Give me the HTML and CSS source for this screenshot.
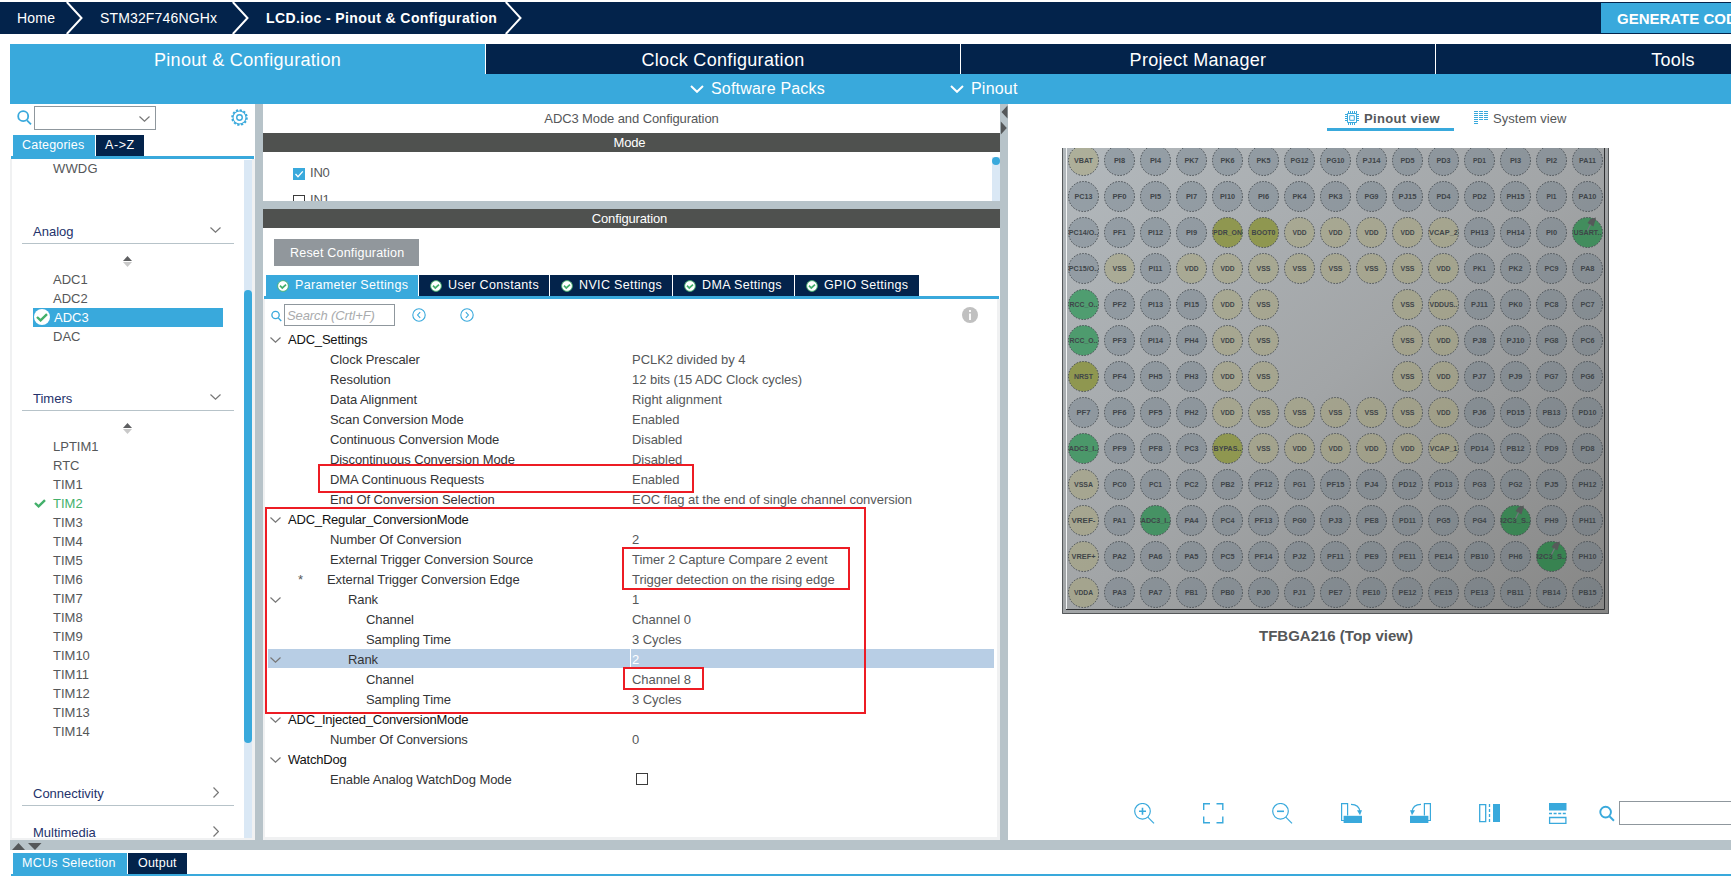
FILE: index.html
```html
<!DOCTYPE html>
<html lang="en">
<head>
<meta charset="utf-8">
<title>LCD.ioc - Pinout &amp; Configuration</title>
<link rel="stylesheet" href="styles.css">
</head>
<body>
<svg class="defs" width="0" height="0">
  <symbol id="down" viewBox="0 0 11 6"><path d="M.5 .5 5.5 5.2 10.5 .5" fill="none" stroke="currentColor" stroke-width="1.2"/></symbol>
  <symbol id="right" viewBox="0 0 6 11"><path d="M.5 .5 5.4 5.5 .5 10.5" fill="none" stroke="currentColor" stroke-width="1.2"/></symbol>
  <symbol id="wdown" viewBox="0 0 14 8"><path d="M1 1 7 6.8 13 1" fill="none" stroke="currentColor" stroke-width="2"/></symbol>
  <symbol id="crumb" viewBox="0 0 17 32"><path d="M.8 0 15.5 16 .8 32" fill="none" stroke="#fff" stroke-width="2"/></symbol>
  <symbol id="search" viewBox="0 0 15 15"><circle cx="6.2" cy="6.2" r="5" fill="none" stroke="currentColor" stroke-width="1.8"/><path d="M10 10.3 14 14.3" stroke="currentColor" stroke-width="1.8"/></symbol>
  <symbol id="ok" viewBox="0 0 12 12"><circle cx="6" cy="6" r="5.4" fill="#fff" stroke="#43b06b" stroke-width=".9"/><path d="M3 5.6 5.3 8 9 4.6" fill="none" stroke="#43b06b" stroke-width="1.7"/></symbol>
  <symbol id="sort" viewBox="0 0 9 11"><path d="M0 5 4.5 0 9 5z" fill="#5e5f61"/><path d="M0 6 4.5 11 9 6z" fill="#c9c9c9"/></symbol>
  <symbol id="check" viewBox="0 0 12 9"><path d="M1 4 4.6 7.4 11 1.2" fill="none" stroke="#43b06b" stroke-width="2.4"/></symbol>
</svg>

<header class="crumbs">
  <span class="crumb home">Home</span><svg class="crumb-sep"><use href="#crumb"/></svg>
  <span class="crumb mcu">STM32F746NGHx</span><svg class="crumb-sep"><use href="#crumb"/></svg>
  <span class="crumb file">LCD.ioc - Pinout &amp; Configuration</span><svg class="crumb-sep"><use href="#crumb"/></svg>
  <button class="generate">GENERATE CODE</button>
</header>

<nav class="main-tabs">
  <div class="main-tab on">Pinout &amp; Configuration</div>
  <div class="main-tab">Clock Configuration</div>
  <div class="main-tab">Project Manager</div>
  <div class="main-tab">Tools</div>
</nav>
<div class="menu-bar">
  <span class="menu packs"><svg><use href="#wdown"/></svg>Software Packs</span>
  <span class="menu pin"><svg><use href="#wdown"/></svg>Pinout</span>
</div>

<main class="work">
  <aside class="side">
    <div class="side-search">
      <svg class="glass"><use href="#search"/></svg>
      <div class="combo"><svg><use href="#down"/></svg></div>
      <svg class="gear" viewBox="0 0 16 16"><g fill="none" stroke="#39a9dc"><circle cx="8" cy="8" r="6.1"/><circle cx="8" cy="8" r="7" stroke-width="1.6" stroke-dasharray="2.1 1.565"/><circle cx="8" cy="8" r="2.6" stroke-width="1.3"/></g></svg>
    </div>
    <div class="side-tabs"><span class="tab on cat">Categories</span><span class="tab az">A-&gt;Z</span></div>
    <div class="side-body">
      <div class="tree">
        <div class="leaf first">WWDG</div>
        <div class="cat-head analog">Analog<svg class="chev"><use href="#down"/></svg></div>
        <svg class="sort"><use href="#sort"/></svg>
        <div class="leaf">ADC1</div>
        <div class="leaf">ADC2</div>
        <div class="leaf picked"><i class="bubble"><svg><use href="#check"/></svg></i>ADC3</div>
        <div class="leaf">DAC</div>
        <div class="cat-head timers">Timers<svg class="chev"><use href="#down"/></svg></div>
        <svg class="sort"><use href="#sort"/></svg>
        <div class="leaf">LPTIM1</div><div class="leaf">RTC</div><div class="leaf">TIM1</div>
        <div class="leaf used"><svg><use href="#check"/></svg>TIM2</div>
        <div class="leaf">TIM3</div><div class="leaf">TIM4</div><div class="leaf">TIM5</div><div class="leaf">TIM6</div>
        <div class="leaf">TIM7</div><div class="leaf">TIM8</div><div class="leaf">TIM9</div><div class="leaf">TIM10</div>
        <div class="leaf">TIM11</div><div class="leaf">TIM12</div><div class="leaf">TIM13</div><div class="leaf">TIM14</div>
        <div class="cat-head conn">Connectivity<svg class="chev-r"><use href="#right"/></svg></div>
        <div class="cat-head multi">Multimedia<svg class="chev-r"><use href="#right"/></svg></div>
      </div>
      <div class="track"><div class="thumb"></div></div>
    </div>
  </aside>

  <section class="config">
    <div class="config-title">ADC3 Mode and Configuration</div>
    <div class="bar">Mode</div>
    <div class="mode">
      <div class="mode-list">
        <label class="mode-row"><i class="box ticked"><svg viewBox="0 0 12 12"><path d="M2.5 6 5 8.8 9.8 3.4" fill="none" stroke="#fff" stroke-width="1.3"/></svg></i>IN0</label>
        <label class="mode-row"><i class="box"></i>IN1</label>
      </div>
      <div class="mode-track"><i></i></div>
    </div>
    <div class="split"></div>
    <div class="bar conf">Configuration</div>
    <button class="reset">Reset Configuration</button>
    <div class="param-tabs">
      <span class="tab on p1"><svg><use href="#ok"/></svg>Parameter Settings</span>
      <span class="tab p2"><svg><use href="#ok"/></svg>User Constants</span>
      <span class="tab p3"><svg><use href="#ok"/></svg>NVIC Settings</span>
      <span class="tab p4"><svg><use href="#ok"/></svg>DMA Settings</span>
      <span class="tab p5"><svg><use href="#ok"/></svg>GPIO Settings</span>
    </div>
    <div class="params">
      <div class="find">
        <svg class="find-glass"><use href="#search"/></svg>
        <div class="find-box">Search (Crtl+F)</div>
        <svg class="step" viewBox="0 0 14 14"><circle cx="7" cy="7" r="6.2"/><path d="M8.2 4.2 5.6 7l2.6 2.8"/></svg>
        <svg class="step next" viewBox="0 0 14 14"><circle cx="7" cy="7" r="6.2"/><path d="M5.8 4.2 8.4 7 5.8 9.8"/></svg>
        <svg class="info" viewBox="0 0 16 16"><circle cx="8" cy="8" r="8" fill="#c0c0c0"/><path d="M8 6.4V13M8 3v2" stroke="#fff" stroke-width="1.8"/></svg>
      </div>
      <div class="row group"><svg><use href="#down"/></svg><b>ADC_Settings</b></div>
      <div class="row"><b>Clock Prescaler</b><span>PCLK2 divided by 4</span></div>
      <div class="row"><b>Resolution</b><span>12 bits (15 ADC Clock cycles)</span></div>
      <div class="row"><b>Data Alignment</b><span>Right alignment</span></div>
      <div class="row"><b>Scan Conversion Mode</b><span>Enabled</span></div>
      <div class="row"><b>Continuous Conversion Mode</b><span>Disabled</span></div>
      <div class="row"><b>Discontinuous Conversion Mode</b><span>Disabled</span></div>
      <div class="row"><b>DMA Continuous Requests</b><span>Enabled</span></div>
      <div class="row"><b>End Of Conversion Selection</b><span>EOC flag at the end of single channel conversion</span></div>
      <div class="row group"><svg><use href="#down"/></svg><b>ADC_Regular_ConversionMode</b></div>
      <div class="row"><b>Number Of Conversion</b><span>2</span></div>
      <div class="row"><b>External Trigger Conversion Source</b><span>Timer 2 Capture Compare 2 event</span></div>
      <div class="row edge"><i>*</i><b>External Trigger Conversion Edge</b><span>Trigger detection on the rising edge</span></div>
      <div class="row rank"><svg><use href="#down"/></svg><b>Rank</b><span>1</span></div>
      <div class="row sub"><b>Channel</b><span>Channel 0</span></div>
      <div class="row sub"><b>Sampling Time</b><span>3 Cycles</span></div>
      <div class="row rank chosen"><svg><use href="#down"/></svg><b>Rank</b><span>2</span></div>
      <div class="row sub"><b>Channel</b><span>Channel 8</span></div>
      <div class="row sub"><b>Sampling Time</b><span>3 Cycles</span></div>
      <div class="row group"><svg><use href="#down"/></svg><b>ADC_Injected_ConversionMode</b></div>
      <div class="row"><b>Number Of Conversions</b><span>0</span></div>
      <div class="row group"><svg><use href="#down"/></svg><b>WatchDog</b></div>
      <div class="row"><b>Enable Analog WatchDog Mode</b><span><i class="box wd"></i></span></div>
    </div>
    <i class="mark m1"></i><i class="mark m2"></i><i class="mark m3"></i><i class="mark m4"></i>
  </section>

  <section class="view">
    <svg class="split-arrows" viewBox="0 0 8 32"><path d="M7.5 1.5v13L1.5 8zM.8 17.5v13L6.8 24z" fill="#55585a"/></svg>
    <div class="view-tabs">
      <span class="view-tab on"><svg viewBox="0 0 14 14"><g fill="none" stroke="#39a9dc"><path d="M2.5 2.5h9v9h-9z"/><path d="M4.7 4.7h4.6v4.6H4.7z"/><path d="M3.5 0v2M5.5 0v2M7.5 0v2M9.5 0v2M11.5 0v2M3.5 12v2M5.5 12v2M7.5 12v2M9.5 12v2M0 3.5h2M0 5.5h2M0 7.5h2M0 9.5h2M12 3.5h2M12 5.5h2M12 7.5h2M12 9.5h2"/></g></svg>Pinout view</span>
      <span class="view-tab sys"><svg viewBox="0 0 14 14"><g fill="none" stroke="#39a9dc" stroke-width="4" stroke-dasharray="1 1"><path d="M2 0v14M7 0v9M12 0v9"/></g></svg>System view</span>
    </div>
    <svg class="chip" id="chip" width="548" height="466" viewBox="1062 148 548 466"></svg>
    <div class="package">TFBGA216 (Top view)</div>
    <div class="tools">
      <svg viewBox="0 0 21 21"><g fill="none" stroke="#39a9dc" stroke-width="1.2"><circle cx="8.5" cy="8.3" r="7.8"/><path d="M13.8 14.2 20 20.4"/><path d="M5 8.3h7M8.5 4.8v7" stroke-width="1.6"/></g></svg>
      <svg viewBox="0 0 21 21"><path d="M.7 7V.7H7M13.5 .7h6.3V7M19.8 13.5v6.3h-6.3M7 19.8H.7v-6.3" fill="none" stroke="#39a9dc" stroke-width="1.4"/></svg>
      <svg viewBox="0 0 21 21"><g fill="none" stroke="#39a9dc" stroke-width="1.2"><circle cx="8.5" cy="8.3" r="7.8"/><path d="M13.8 14.2 20 20.4"/><path d="M5 8.3h7" stroke-width="1.6"/></g></svg>
      <svg viewBox="0 0 21 21"><path d="M3 17.5H.6V.6h6v12" fill="none" stroke="#39a9dc" stroke-width="1.2"/><path d="M2.6 12.8H21V20H2.6z" fill="#39a9dc"/><path d="M10 1.3c5 .2 8.500 3 9 7.2" fill="none" stroke="#39a9dc" stroke-width="1.3"/><path d="M16 7.2h5l-2 5z" fill="#39a9dc"/></svg>
      <svg viewBox="0 0 21 21"><g transform="translate(21 0) scale(-1 1)"><path d="M3 17.5H.6V.6h6v12" fill="none" stroke="#39a9dc" stroke-width="1.2"/><path d="M2.6 12.8H21V20H2.6z" fill="#39a9dc"/><path d="M10 1.3c5 .2 8.500 3 9 7.2" fill="none" stroke="#39a9dc" stroke-width="1.3"/><path d="M16 7.2h5l-2 5z" fill="#39a9dc"/></g></svg>
      <svg viewBox="0 0 21 21"><path d="M.7 1.7h6v17h-6z" fill="none" stroke="#39a9dc" stroke-width="1.3"/><path d="M14 1h7v18h-7z" fill="#39a9dc"/><path d="M10.5 1v18" stroke="#39a9dc" stroke-width="1.3" stroke-dasharray="3 2"/></svg>
      <svg viewBox="0 0 21 21"><path d="M1 0h17.5v7.5H1z" fill="#39a9dc"/><path d="M1 10.5h17.5" stroke="#39a9dc" stroke-width="1.3" stroke-dasharray="3 1.6"/><path d="M1.6 14.5h16.3v5.8H1.6z" fill="none" stroke="#39a9dc" stroke-width="1.3"/></svg>
      <svg class="tool-glass"><use href="#search"/></svg>
      <div class="tool-box"></div>
    </div>
  </section>
</main>

<div class="hsplit"><svg width="30" height="7" viewBox="0 0 30 7"><path d="M0 7 6.5 0 13 7zM16 0h13.5L23 7z" fill="#55585a"/></svg></div>
<footer class="bottom"><span class="tab on b1">MCUs Selection</span><span class="tab b2">Output</span></footer>
<script src="chip.js"></script>
</body>
</html>
```
FILE: styles.css
```css
* { box-sizing: border-box; }
body { margin: 0; padding-top: 2px; width: 1731px; height: 876px; overflow: hidden; background: #fff; font: 13px/19px "Liberation Sans", Arial, sans-serif; color: #555759; }
svg { display: block; flex: none; }
.defs { position: absolute; }
button { border: 0; padding: 0; font-family: inherit; text-align: left; white-space: nowrap; }

.crumbs { display: flex; height: 32px; background: #03234b; color: #fff; font-size: 14px; line-height: 33px; }
.crumb { white-space: nowrap; flex: none; }
.home { width: 66px; padding-left: 17px; letter-spacing: .2px; }
.crumb-sep { width: 17px; height: 32px; }
.mcu { width: 149px; padding-left: 17px; letter-spacing: .15px; }
.file { width: 256px; padding-left: 17px; font-weight: bold; letter-spacing: .4px; }
.generate { margin: 1px 0 1px auto; width: 130px; height: 30px; padding-left: 16px; background: #39a9dc; color: #fff; font-size: 15px; font-weight: bold; overflow: hidden; }

.main-tabs { display: flex; margin: 10px 0 0 10px; height: 30px; overflow: hidden; }
.main-tab { flex: none; width: 475px; background: #03234b; border-right: 1px solid #fff; color: #fff; font-size: 18px; line-height: 32px; text-align: center; letter-spacing: .32px; }
.main-tab.on { width: 476px; background: #39a9dc; }
.menu-bar { display: flex; margin-left: 10px; height: 30px; background: #39a9dc; color: #fff; font-size: 16px; line-height: 32px; }
.menu { display: flex; align-items: center; gap: 7px; letter-spacing: .2px; }
.menu svg { width: 14px; height: 8px; }
.packs { margin-left: 680px; width: 260px; }

.work { display: flex; height: 736px; margin-left: 10px; }
.side { display: flex; flex: none; flex-direction: column; width: 245px; }
.side-search { display: flex; height: 31px; padding: 2px 7px 0; }
.glass { width: 15px; height: 15px; margin-top: 4px; color: #39a9dc; }
.combo { flex: none; width: 122px; height: 24px; margin: 0 75px 0 2px; border: 1px solid #8f979d; padding: 9px 0 0 104px; color: #777; }
.combo svg { width: 11px; height: 6px; }
.gear { width: 17px; height: 17px; margin-top: 3px; }
.tab { display: flex; align-items: center; height: 21px; background: #03234b; color: #fff; white-space: nowrap; font-size: 12.5px; letter-spacing: .35px; }
.tab.on { background: #39a9dc; }
.side-tabs { display: flex; gap: 1px; height: 24px; margin: 0 1px; padding-left: 2px; border-bottom: 3px solid #39a9dc; }
.cat { width: 82px; padding-left: 9px; letter-spacing: .2px; }
.az { width: 48px; padding-left: 9px; letter-spacing: .6px; }
.side-body { display: flex; flex: 1; min-height: 0; border: solid #f0f1f2; border-width: 0 3px 2px 2px; justify-content: space-between; overflow: hidden; }
.tree { width: 224px; height: 678px; overflow: hidden; padding-left: 10px; }
.track { width: 8px; margin-top: 1px; background: #dae8f5; }
.thumb { height: 453px; margin-top: 130px; border-radius: 4px; background: #39a9dc; }
.leaf { height: 19px; padding-left: 31px; }
.leaf.first { height: 52px; letter-spacing: .15px; }
.cat-head { display: flex; width: 212px; height: 25px; padding: 3px 0 0 11px; border-bottom: 1px solid #b7c3c9; color: #24326b; justify-content: space-between; }
.chev { width: 11px; height: 6px; margin: 5px 13px 0 0; color: #777; }
.chev-r { width: 6px; height: 11px; margin: 3px 15px 0 0; color: #777; }
.analog { margin-top: 8px; }
.timers { margin-top: 40px; }
.conn { margin-top: 42px; height: 23px; padding-top: 1px; }
.multi { margin-top: 17px; padding-top: 0; }
.sort { width: 9px; height: 11px; margin: 12px 0 3px 101px; }
.picked { display: flex; width: 190px; margin-left: 11px; padding-left: 1px; background: #39a9dc; color: #fff; gap: 4px; }
.bubble { width: 16px; height: 16px; margin-top: 1px; border-radius: 50%; background: #fff; padding: 4px 2px; }
.bubble svg, .used svg { width: 12px; height: 9px; }
.used { display: flex; padding-left: 12px; gap: 7px; color: #43b06b; }
.used svg { margin-top: 5px; }

.config { position: relative; display: flex; flex: none; flex-direction: column; width: 753px; padding: 0 8px; background: linear-gradient(#fff, #fff) 8px 0 / 737px 100% no-repeat #b7c3c9; }
.config-title { height: 29px; line-height: 29px; text-align: center; letter-spacing: -.1px; }
.bar { height: 19px; background: #4f514f; color: #fff; text-align: center; line-height: 19px; letter-spacing: -.15px; padding-right: 4px; }
.mode { display: flex; height: 49px; overflow: hidden; justify-content: space-between; }
.mode-list { padding: 11px 0 0 30px; }
.mode-row { display: flex; align-items: center; height: 27px; padding-bottom: 8px; gap: 5px; letter-spacing: -.2px; }
.box { flex: none; width: 12px; height: 12px; border: 1px solid #3c3c3c; background: #fff; }
.mode-row .box { margin-top: 2px; }
.box.ticked { border: 0; background: #39a9dc; }
.box svg { width: 12px; height: 12px; }
.mode-track { width: 8px; margin-top: 5px; background: #dae8f5; }
.mode-track i { display: block; width: 8px; height: 8px; border-radius: 50%; background: #39a9dc; }
.split { height: 8px; background: #b7c3c9; }
.reset { width: 145px; height: 27px; margin: 11px 0 9px 11px; padding-left: 16px; background: #91979c; color: #fff; font-size: 12.5px; letter-spacing: .2px; }
.param-tabs { display: flex; gap: 1px; height: 24px; margin: 0 1px; padding-left: 2px; border-bottom: 3px solid #39a9dc; }
.param-tabs .tab { padding-left: 11px; gap: 6px; }
.param-tabs svg { width: 12px; height: 12px; }
.p1 { width: 152px; } .p2 { width: 130px; } .p3 { width: 122px; } .p4 { width: 121px; } .p5 { width: 124px; }
.params { flex: 1; border: solid #f0f1f2; border-width: 0 3px 3px 2px; }
.find { display: flex; height: 30px; padding: 5px 0 0 6px; }
.find-glass { width: 11px; height: 12px; margin-top: 6px; color: #39a9dc; }
.find-box { width: 111px; height: 22px; margin: 0 17px 0 2px; border: 1px solid #8f979d; padding-left: 2px; line-height: 21px; font-style: italic; color: #a9abad; letter-spacing: -.1px; }
.step { width: 14px; height: 14px; margin-top: 4px; fill: none; stroke: #39a9dc; stroke-width: 1.1; }
.step.next { margin-left: 34px; }
.info { width: 16px; height: 16px; margin: 3px 0 0 488px; }
.row { display: flex; height: 20px; line-height: 21px; padding-left: 65px; white-space: nowrap; }
.row svg { width: 11px; height: 6px; margin: 8px 7px 0 0; color: #777; }
.row b { width: 302px; font-weight: normal; color: #333436; letter-spacing: -.08px; }
.row span { letter-spacing: -.04px; }
.row.group { padding-left: 5px; }
.row.group b { color: #111; letter-spacing: -.2px; }
.row.edge { padding-left: 33px; }
.row.edge i { width: 29px; font-style: normal; }
.row.edge b { width: 305px; }
.row.rank { padding-left: 5px; }
.row.rank b { width: 344px; padding-left: 60px; }
.row.sub { padding-left: 101px; }
.row.sub b { width: 266px; }
.row.chosen { height: 19px; margin: 0 3px 1px 3px; padding-left: 2px; background: linear-gradient(#fff, #fff) 362px 0 / 1px 100% no-repeat #b8cee5; color: #fff; }
.wd { display: block; margin: 4px 0 0 4px; }
.mark { position: absolute; border: 2px solid #ed1c24; }
.m1 { left: 63px; top: 360px; width: 376px; height: 29px; }
.m2 { left: 10px; top: 403px; width: 601px; height: 207px; }
.m3 { left: 367px; top: 443px; width: 228px; height: 43px; }
.m4 { left: 368px; top: 563px; width: 81px; height: 23px; }

.view { position: relative; flex: 1; min-width: 0; display: flex; flex-direction: column; }
.split-arrows { position: absolute; left: -8px; top: 0; width: 8px; height: 32px; }
.view-tabs { display: flex; height: 27px; margin-left: 319px; }
.view-tab { display: flex; width: 127px; padding: 0 0 3px 18px; gap: 5px; line-height: 29px; letter-spacing: .05px; white-space: nowrap; font-size: 13px; }
.view-tab.on { border-bottom: 3px solid #39a9dc; font-weight: bold; padding-bottom: 0; letter-spacing: .35px; }
.view-tab.sys { margin-left: 2px; }
.view-tab svg { width: 14px; height: 14px; margin-top: 7px; }
.chip { margin: 17px 0 0 54px; }
.ball { stroke: #454b50; stroke-width: 1; stroke-dasharray: 1.5 1.5; }
.ball-text { font: bold 6.5px "Liberation Sans", Arial, sans-serif; fill: #3f4549; }
.package { margin: 12px 0 0 251px; font-size: 15px; line-height: 20px; font-weight: bold; }
.tools { display: flex; margin: 153px 0 0 126px; height: 27px; padding-top: 4px; gap: 48px; overflow: hidden; }
.tools svg { width: 21px; height: 21px; }
.tools .tool-glass { width: 16px; height: 17px; margin: 2px 0 0 -18px; color: #39a9dc; }
.tools .tool-box { flex: none; width: 140px; height: 24px; margin: -2px 0 0 -44px; border: 1px solid #8f979d; }

.hsplit { height: 10px; margin-left: 10px; padding: 3px 0 0 2px; background: #b7c3c9; }
.bottom { display: flex; gap: 1px; height: 26px; margin-left: 11px; padding: 3px 0 0 2px; border-bottom: 2px solid #39a9dc; }
.b1 { width: 114px; padding-left: 9px; letter-spacing: .3px; }
.b2 { width: 59px; padding-left: 10px; letter-spacing: .2px; }
```
FILE: chip.js
```javascript
const rows = [
  'VBAT PI8 PI4 PK7 PK6 PK5 PG12 PG10 PJ14 PD5 PD3 PD1 PI3 PI2 PA11',
  'PC13 PF0 PI5 PI7 PI10 PI6 PK4 PK3 PG9 PJ15 PD4 PD2 PH15 PI1 PA10',
  'PC14/O.. PF1 PI12 PI9 PDR_ON BOOT0 VDD VDD VDD VDD VCAP_2 PH13 PH14 PI0 USART..',
  'PC15/O.. VSS PI11 VDD VDD VSS VSS VSS VSS VSS VDD PK1 PK2 PC9 PA8',
  'RCC_O.. PF2 PI13 PI15 VDD VSS - - - VSS VDDUS.. PJ11 PK0 PC8 PC7',
  'RCC_O.. PF3 PI14 PH4 VDD VSS - - - VSS VDD PJ8 PJ10 PG8 PC6',
  'NRST PF4 PH5 PH3 VDD VSS - - - VSS VDD PJ7 PJ9 PG7 PG6',
  'PF7 PF6 PF5 PH2 VDD VSS VSS VSS VSS VSS VDD PJ6 PD15 PB13 PD10',
  'ADC3_I.. PF9 PF8 PC3 BYPAS.. VSS VDD VDD VDD VDD VCAP_1 PD14 PB12 PD9 PD8',
  'VSSA PC0 PC1 PC2 PB2 PF12 PG1 PF15 PJ4 PD12 PD13 PG3 PG2 PJ5 PH12',
  'VREF- PA1 ADC3_I.. PA4 PC4 PF13 PG0 PJ3 PE8 PD11 PG5 PG4 I2C3_S.. PH9 PH11',
  'VREF+ PA2 PA6 PA5 PC5 PF14 PJ2 PF11 PE9 PE11 PE14 PB10 PH6 I2C3_S.. PH10',
  'VDDA PA3 PA7 PB1 PB0 PJ0 PJ1 PE7 PE10 PE12 PE15 PE13 PB11 PB14 PB15'
];

// Ball colour by pin kind; assigned pins darken towards the lower right corner.
function fill(name, col, row) {
  if (/^(RCC|ADC3|USART|I2C3)/.test(name)) {
    const t = (col + row) / 26;
    return `rgb(${Math.round(84 - 30 * t)},${Math.round(162 - 34 * t)},${Math.round(118 - 40 * t)})`;
  }
  if (/^(PDR|BOOT|NRST|BYPAS)/.test(name)) return '#8f9750';
  if (/^V/.test(name)) return 'rgba(168,163,108,.42)';
  return 'rgba(98,115,130,.35)';
}

// Label width: fixed-pitch capitals with narrower I, 1, slash and dots.
const narrow = { I: 2, 1: 3.8, '/': 2.5, '.': 2 };
const labelWidth = name => [...name].reduce((sum, ch) => sum + (narrow[ch] || 4.9), -.6);

let out = `<defs><linearGradient id="body" x1="0" y1="0" x2="1" y2="1">
<stop offset="0" stop-color="#b3b9bd"/><stop offset=".5" stop-color="#a2a5a7"/><stop offset="1" stop-color="#868685"/></linearGradient></defs>
<rect x="1062" y="140" width="547" height="474" fill="url(#body)"/>
<path d="M1062.5 148V613.5H1608.5V148" fill="none" stroke="#55585a"/>
<path d="M1066.5 148V609" stroke="#f2f4f5"/>
<path d="M1066 609.5H1604.5V148" fill="none" stroke="#2d2f31"/>`;
rows.forEach((line, r) => line.split(' ').forEach((name, c) => {
  if (name === '-') return;
  const x = 1083.5 + 36 * c, y = 160.5 + 36 * r;
  const w = Math.min(labelWidth(name), 29.5);
  out += `<circle class="ball" cx="${x}" cy="${y}" r="15" fill="${fill(name, c, r)}"/>`;
  out += `<text class="ball-text" x="${x - w / 2}" y="${y + 2.5}" textLength="${w}" lengthAdjust="spacingAndGlyphs">${name}</text>`;
  if (/^(USART|I2C3)/.test(name)) {
    out += `<g transform="translate(${x} ${y})"><path d="M3-13.500 8.500-15 7-9.500 6-6 0-9.500z" fill="#565a5a"/><path d="M3-8 0-2" stroke="#70787a" stroke-width="1.2"/></g>`;
  }
}));
document.getElementById('chip').innerHTML = out;
```
